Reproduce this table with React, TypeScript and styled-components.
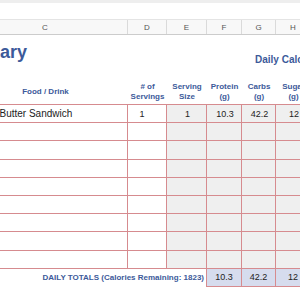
import React from 'react';
import styled, { createGlobalStyle } from 'styled-components';

const GlobalStyle = createGlobalStyle`
  html, body { margin: 0; padding: 0; overflow: hidden; background: #fff; }
  body { font-family: "Liberation Sans", Arial, sans-serif; }
`;

const COLS = '40px 43px 165px 39px 40px 35px 34px 35px';
const RED = '#d68b8f';
const BLUE = '#3c5a9a';

const Page = styled.div`
  width: 300px;
  height: 300px;
  overflow: hidden;
`;

const TopStrip = styled.div`
  height: 3px;
  background: #eeeeee;
`;

const Sheet = styled.div`
  margin-left: -120px;
  width: 431px;
  padding-top: 16px;
`;

const LetterRow = styled.div`
  display: grid;
  grid-template-columns: ${COLS};
  height: 16px;
  box-sizing: border-box;
  background: #f8f8f8;
  border-top: 1px solid #e4e4e4;
  border-bottom: 1px solid #cccccc;
`;

const Letter = styled.div`
  display: flex;
  align-items: center;
  justify-content: center;
  border-right: 1px solid #dadada;
  font-size: 8px;
  color: #555;
`;

const TitleRow = styled.div`
  display: grid;
  grid-template-columns: ${COLS};
  height: 45px;
`;

const Title = styled.div`
  grid-column: 1 / 4;
  padding: 7px 0 0 53px;
  font-size: 18px;
  line-height: 20px;
  font-weight: bold;
  color: ${BLUE};
  white-space: nowrap;
`;

const Goal = styled.div`
  grid-column: 7 / 9;
  padding: 19px 0 0 13px;
  font-size: 10px;
  line-height: 12px;
  font-weight: bold;
  color: ${BLUE};
  white-space: nowrap;
`;

const LabelRow = styled.div`
  display: grid;
  grid-template-columns: ${COLS};
  height: 24px;
  align-items: center;
`;

const Label = styled.div<{ $col: number }>`
  grid-column: ${(p) => p.$col};
  text-align: center;
  font-size: 8px;
  line-height: 10px;
  font-weight: bold;
  color: ${BLUE};
  white-space: nowrap;
`;

const Grid = styled.div`
  display: grid;
  grid-template-columns: ${COLS};
  grid-auto-rows: 18.2px;
  border-top: 1px solid ${RED};
`;

const Cell = styled.div<{ $shade?: boolean; $align?: 'left' | 'center'; $padRight?: number }>`
  box-sizing: border-box;
  border-right: 1px solid ${RED};
  border-bottom: 1px solid ${RED};
  background: ${(p) => (p.$shade ? '#efefef' : '#ffffff')};
  display: flex;
  align-items: center;
  justify-content: ${(p) => (p.$align === 'left' ? 'flex-start' : 'center')};
  padding: 0 ${(p) => p.$padRight ?? 0}px 0 2px;
  font-size: ${(p) => (p.$align === 'left' ? '10px' : '9px')};
  color: #222;
  white-space: nowrap;
  overflow: hidden;
`;

const Blank = styled.div``;

const TotalsRow = styled.div`
  display: grid;
  grid-template-columns: ${COLS};
  height: 18px;
`;

const TotalsLabel = styled.div`
  grid-column: 1 / 6;
  display: flex;
  align-items: center;
  justify-content: flex-end;
  padding-right: 2px;
  border-right: 1px solid ${RED};
  font-size: 8px;
  font-weight: bold;
  color: ${BLUE};
  white-space: nowrap;
`;

const TotalCell = styled.div`
  box-sizing: border-box;
  display: flex;
  align-items: center;
  justify-content: center;
  background: #d6dcee;
  border-right: 1px solid ${RED};
  border-bottom: 1px solid ${RED};
  font-size: 9px;
  color: #222;
`;

type Row = { food: string; servings: string; size: string; protein: string; carbs: string; sugar: string };

const rows: Row[] = [
  { food: 'Peanut Butter Sandwich', servings: '1', size: '1', protein: '10.3', carbs: '42.2', sugar: '12' },
  ...Array.from({ length: 8 }, () => ({ food: '', servings: '', size: '', protein: '', carbs: '', sugar: '' })),
];

export default function App() {
  return (
    <Page>
      <GlobalStyle />
      <TopStrip />
      <Sheet>
        <LetterRow>
          {['A', 'B', 'C', 'D', 'E', 'F', 'G', 'H'].map((l) => (
            <Letter key={l}>{l}</Letter>
          ))}
        </LetterRow>
        <TitleRow>
          <Title>Food Diary</Title>
          <Goal>Daily Calorie Goal: 2000</Goal>
        </TitleRow>
        <LabelRow>
          <Label $col={3}>Food / Drink</Label>
          <Label $col={4}># of<br />Servings</Label>
          <Label $col={5}>Serving<br />Size</Label>
          <Label $col={6}>Protein<br />(g)</Label>
          <Label $col={7}>Carbs<br />(g)</Label>
          <Label $col={8}>Sugar<br />(g)</Label>
        </LabelRow>
        <Grid>
          {rows.map((r, i) => (
            <React.Fragment key={i}>
              <Blank />
              <Blank />
              <Cell $align="left">{r.food}</Cell>
              <Cell $padRight={12}>{r.servings}</Cell>
              <Cell $shade>{r.size}</Cell>
              <Cell $shade>{r.protein}</Cell>
              <Cell $shade>{r.carbs}</Cell>
              <Cell $shade>{r.sugar}</Cell>
            </React.Fragment>
          ))}
        </Grid>
        <TotalsRow>
          <TotalsLabel>DAILY TOTALS (Calories Remaining: 1823)</TotalsLabel>
          <TotalCell>10.3</TotalCell>
          <TotalCell>42.2</TotalCell>
          <TotalCell>12</TotalCell>
        </TotalsRow>
      </Sheet>
    </Page>
  );
}
